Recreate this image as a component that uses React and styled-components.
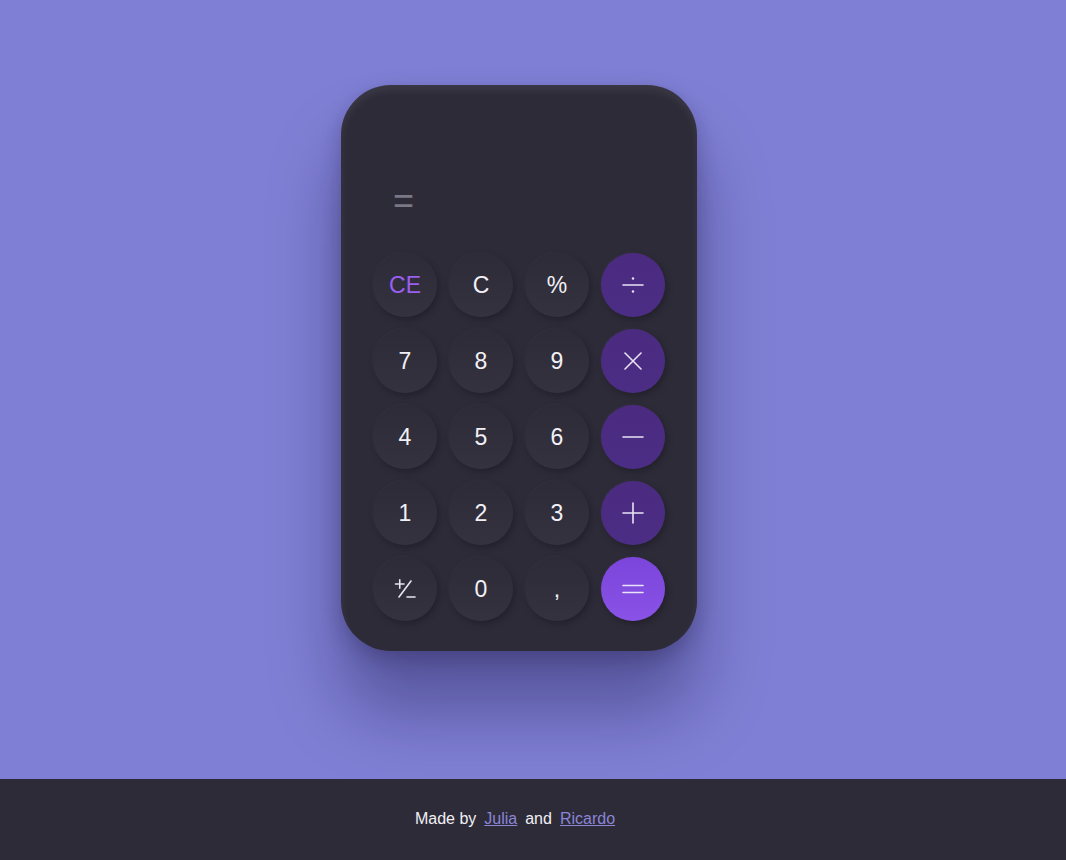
import React from 'react';
import styled, { createGlobalStyle } from 'styled-components';

const GlobalStyle = createGlobalStyle`
  html, body {
    margin: 0;
    padding: 0;
    background: #7f7fd5;
    font-family: "Liberation Sans", Arial, sans-serif;
  }
`;

const Page = styled.div`
  display: flex;
  flex-direction: column;
  min-height: 860px;
`;

const Main = styled.main`
  height: 779px;
  display: flex;
  justify-content: center;
  align-items: flex-start;
  padding: 85px 28px 0 0;
  box-sizing: border-box;
  background: #7f7fd5;
`;

const Calculator = styled.div`
  width: 356px;
  box-sizing: border-box;
  padding: 30px 32px 30px;
  border-radius: 50px;
  background: #2d2b38;
  box-shadow:
    inset 0 5px 8px rgba(255, 255, 255, 0.07),
    0 8px 20px rgba(20, 15, 50, 0.25),
    0 60px 70px rgba(20, 15, 60, 0.38);
`;

const Display = styled.div`
  height: 138px;
  display: flex;
  flex-direction: column;
  justify-content: flex-start;
  padding: 68px 20px 0 20px;
  box-sizing: border-box;
`;

const Expression = styled.div`
  font-size: 36px;
  line-height: 1;
  color: #7a7885;
`;

const Keys = styled.div`
  display: grid;
  grid-template-columns: repeat(4, 64px);
  grid-auto-rows: 64px;
  gap: 12px;
`;

const Key = styled.button`
  width: 64px;
  height: 64px;
  border: none;
  border-radius: 50%;
  padding: 0;
  display: flex;
  align-items: center;
  justify-content: center;
  font-family: "Liberation Sans", Arial, sans-serif;
  font-size: 23px;
  color: ${p => (p.$accent ? '#9a5ff0' : '#f2f0f6')};
  background: ${p =>
    p.$variant === 'equals'
      ? 'linear-gradient(180deg, #7b45db 0%, #8a52e6 100%)'
      : p.$variant === 'op'
      ? 'linear-gradient(180deg, #4a2b80 0%, #4c2d85 100%)'
      : 'linear-gradient(180deg, #2d2b37 0%, #34323e 100%)'};
  box-shadow:
    2px 3px 6px rgba(0, 0, 0, 0.25),
    -1px -1px 3px rgba(255, 255, 255, 0.03);
  cursor: pointer;
`;

const Footer = styled.footer`
  height: 81px;
  background: #2d2b38;
  display: flex;
  align-items: center;
  justify-content: center;
  padding: 0 28px 2px 0;
  box-sizing: border-box;
  color: #f1f0f5;
  font-size: 16px;
`;

const Credit = styled.a`
  color: #8b85d6;
  text-decoration: underline;
  margin: 0 8px;
`;

const Icon = ({ children }) => (
  <svg width="22" height="22" viewBox="0 0 22 22" fill="none" stroke="#e9e4f5" strokeWidth="1.6" strokeLinecap="round">
    {children}
  </svg>
);

const Divide = () => (
  <Icon>
    <line x1="1" y1="11" x2="21" y2="11" />
    <circle cx="11" cy="4.5" r="1.2" fill="#e9e4f5" stroke="none" />
    <circle cx="11" cy="17.5" r="1.2" fill="#e9e4f5" stroke="none" />
  </Icon>
);

const Times = () => (
  <Icon>
    <line x1="3" y1="3" x2="19" y2="19" />
    <line x1="19" y1="3" x2="3" y2="19" />
  </Icon>
);

const Minus = () => (
  <Icon>
    <line x1="1" y1="11" x2="21" y2="11" />
  </Icon>
);

const Plus = () => (
  <Icon>
    <line x1="1" y1="11" x2="21" y2="11" />
    <line x1="11" y1="1" x2="11" y2="21" />
  </Icon>
);

const Equals = () => (
  <Icon>
    <line x1="1" y1="7.5" x2="21" y2="7.5" />
    <line x1="1" y1="14.5" x2="21" y2="14.5" />
  </Icon>
);

const PlusMinus = () => (
  <Icon>
    <line x1="1.5" y1="6" x2="10" y2="6" />
    <line x1="5.75" y1="1.8" x2="5.75" y2="10.2" />
    <line x1="17" y1="3" x2="5" y2="19" />
    <line x1="13" y1="19" x2="21" y2="19" />
  </Icon>
);

const keys = [
  { label: 'CE', accent: true },
  { label: 'C' },
  { label: '%' },
  { icon: <Divide />, variant: 'op' },
  { label: '7' },
  { label: '8' },
  { label: '9' },
  { icon: <Times />, variant: 'op' },
  { label: '4' },
  { label: '5' },
  { label: '6' },
  { icon: <Minus />, variant: 'op' },
  { label: '1' },
  { label: '2' },
  { label: '3' },
  { icon: <Plus />, variant: 'op' },
  { icon: <PlusMinus /> },
  { label: '0' },
  { label: ',' },
  { icon: <Equals />, variant: 'equals' },
];

export default function App() {
  return (
    <>
      <GlobalStyle />
      <Page>
        <Main>
          <Calculator>
            <Display>
              <Expression>=</Expression>
            </Display>
            <Keys>
              {keys.map((k, i) => (
                <Key key={i} $accent={k.accent} $variant={k.variant}>
                  {k.icon || k.label}
                </Key>
              ))}
            </Keys>
          </Calculator>
        </Main>
        <Footer>
          Made by <Credit href="#">Julia</Credit> and <Credit href="#">Ricardo</Credit>
        </Footer>
      </Page>
    </>
  );
}
